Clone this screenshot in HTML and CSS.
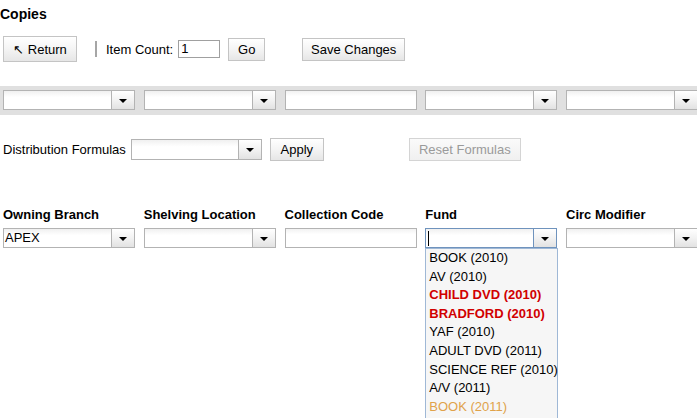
FILE: index.html
```html
<!DOCTYPE html>
<html>
<head>
<meta charset="utf-8">
<title>Copies</title>
<link rel="stylesheet" href="styles.css">
</head>
<body>
<div class="page">
  <div class="title">Copies</div>

  <div class="toolbar">
    <button class="btn btn-return">&#8598; Return</button>
    <span class="sep"></span>
    <span class="label lbl-count">Item Count:</span>
    <span class="textbox count-box">1</span>
    <button class="btn btn-go">Go</button>
    <button class="btn btn-save">Save Changes</button>
  </div>

  <div class="band">
    <div class="select"><span class="sel-text"></span><span class="sel-arrow"><span class="tri"></span></span></div>
    <div class="select"><span class="sel-text"></span><span class="sel-arrow"><span class="tri"></span></span></div>
    <div class="textbox field"></div>
    <div class="select"><span class="sel-text"></span><span class="sel-arrow"><span class="tri"></span></span></div>
    <div class="select"><span class="sel-text"></span><span class="sel-arrow"><span class="tri"></span></span></div>
  </div>

  <div class="formula-row">
    <span class="label">Distribution Formulas</span>
    <div class="select formula-select"><span class="sel-text"></span><span class="sel-arrow"><span class="tri"></span></span></div>
    <button class="btn btn-apply">Apply</button>
    <button class="btn btn-reset" disabled>Reset Formulas</button>
  </div>

  <div class="headers">
    <div class="hdr">Owning Branch</div>
    <div class="hdr">Shelving Location</div>
    <div class="hdr">Collection Code</div>
    <div class="hdr">Fund</div>
    <div class="hdr">Circ Modifier</div>
  </div>

  <div class="fields">
    <div class="select"><span class="sel-text">APEX</span><span class="sel-arrow"><span class="tri"></span></span></div>
    <div class="select"><span class="sel-text"></span><span class="sel-arrow"><span class="tri"></span></span></div>
    <div class="textbox field"></div>
    <div class="fund-wrap">
      <div class="select focused"><span class="sel-text"><span class="caret"></span></span><span class="sel-arrow"><span class="tri"></span></span></div>
      <ul class="popup">
        <li>BOOK (2010)</li>
        <li>AV (2010)</li>
        <li class="red">CHILD DVD (2010)</li>
        <li class="red">BRADFORD (2010)</li>
        <li>YAF (2010)</li>
        <li>ADULT DVD (2011)</li>
        <li>SCIENCE REF (2010)</li>
        <li>A/V (2011)</li>
        <li class="tan">BOOK (2011)</li>
      </ul>
    </div>
    <div class="select"><span class="sel-text"></span><span class="sel-arrow"><span class="tri"></span></span></div>
  </div>
</div>
</body>
</html>
```
FILE: styles.css
```css
html, body {
  margin: 0;
  padding: 0;
  background: #ffffff;
  overflow: hidden;
}
body {
  font-family: "Liberation Sans", Arial, sans-serif;
  font-size: 13px;
  color: #000;
}
.page {
  width: 697px;
  height: 418px;
  position: relative;
}
.title {
  padding-top: 6px;
  height: 16px;
  line-height: 16px;
  font-size: 14px;
  font-weight: bold;
}

/* buttons */
.btn {
  font-family: "Liberation Sans", Arial, sans-serif;
  font-size: 13px;
  color: #000;
  border: 1px solid #c4c4c4;
  border-radius: 0;
  background: linear-gradient(#ffffff 0%, #f4f4f4 50%, #e6e6e6 100%);
  padding: 0;
  margin: 0;
  height: 23px;
  box-sizing: border-box;
  text-align: center;
}
.btn[disabled] {
  color: #9a9a9a;
  border-color: #d4d4d4;
  background: linear-gradient(#fafafa 0%, #f0f0f0 100%);
}

.toolbar {
  margin-top: 14px;
  height: 26px;
  padding-left: 3px;
  display: flex;
  align-items: center;
}
.btn-return { width: 74px; height: 26px; }
.sep {
  margin-left: 18px;
  width: 2px;
  height: 16px;
  background: #a6a6a6;
}
.lbl-count { margin-left: 9px; }
.textbox {
  display: block;
  box-sizing: border-box;
  border: 1px solid #b3b3b3;
  background: linear-gradient(#f2f2f2 0%, #ffffff 30%, #ffffff 100%);
  height: 20px;
}
.count-box {
  margin-left: 5px;
  width: 42px;
  height: 18px;
  line-height: 16px;
  padding-left: 2px;
  border-color: #a0a0a0;
  background: #fff;
}
.btn-go { margin-left: 8px; width: 37px; }
.btn-save { margin-left: 37px; width: 103px; }

/* select widget */
.select {
  box-sizing: border-box;
  height: 20px;
  border: 1px solid #b3b3b3;
  background: linear-gradient(#f0f0f0 0%, #ffffff 35%, #ffffff 100%);
  display: flex;
}
.sel-text {
  flex: 1;
  line-height: 18px;
  padding-left: 1px;
  position: relative;
}
.sel-arrow {
  width: 22px;
  border-left: 1px solid #b3b3b3;
  background: linear-gradient(#ffffff 0%, #f2f2f2 50%, #e2e2e2 100%);
  display: flex;
  align-items: center;
  justify-content: center;
}
.tri {
  width: 0;
  height: 0;
  border-left: 4px solid transparent;
  border-right: 4px solid transparent;
  border-top: 4px solid #000;
  margin-top: 1px;
}

.band {
  margin-top: 24px;
  height: 29px;
  background: #e0e0e0;
  box-sizing: border-box;
  padding: 4px 0 0 3px;
  display: grid;
  grid-template-columns: repeat(5, 132px);
  column-gap: 8.75px;
  align-items: start;
}
.field { height: 20px; }

.formula-row {
  margin-top: 23px;
  height: 23px;
  padding-left: 3px;
  display: flex;
  align-items: center;
}
.formula-select {
  margin-left: 5px;
  width: 131px;
  height: 21px;
}
.btn-apply { margin-left: 8px; width: 54px; }
.btn-reset { margin-left: 85px; width: 112px; }

.headers {
  margin-top: 46px;
  padding-left: 3px;
  display: grid;
  grid-template-columns: repeat(5, 132px);
  column-gap: 8.75px;
  height: 16px;
  line-height: 16px;
}
.hdr {
  font-weight: bold;
  white-space: nowrap;
}

.fields {
  margin-top: 5px;
  padding-left: 3px;
  display: grid;
  grid-template-columns: repeat(5, 132px);
  column-gap: 8.75px;
}
.fund-wrap { position: relative; }
.select.focused,
.select.focused .sel-arrow {
  border-color: #6f93bd;
}
.caret {
  position: absolute;
  left: 2px;
  top: 2px;
  width: 1px;
  height: 15px;
  background: #000;
}
.popup {
  position: absolute;
  left: 0;
  top: 20px;
  width: 133px;
  margin: 0;
  padding: 0;
  list-style: none;
  box-sizing: border-box;
  border: 1px solid #9fb8d6;
  border-bottom: none;
  background: #f6f6f6;
  height: 180px;
  z-index: 5;
}
.popup li {
  height: 18.6px;
  line-height: 18.6px;
  padding-left: 3px;
  white-space: nowrap;
}
.popup li.red {
  color: #d10000;
  font-weight: bold;
}
.popup li.tan {
  color: #e0a24a;
}
```
